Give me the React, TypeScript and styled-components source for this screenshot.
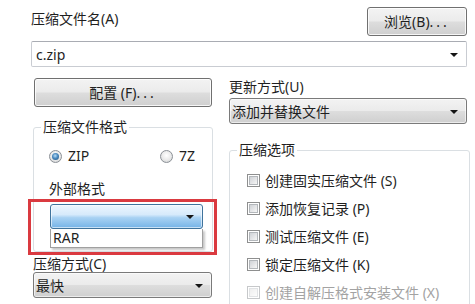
import styled, { createGlobalStyle } from "styled-components";

const GlobalStyle = createGlobalStyle`
  html, body {
    margin: 0;
    background: #ffffff;
  }
  body {
    font-family: "Noto Sans", "Noto Sans CJK SC", sans-serif;
    font-size: 14px;
    color: #1f1f1f;
  }
`;

const Dialog = styled.div`
  width: 475px;
  height: 304px;
  box-sizing: border-box;
  padding: 7px 8px 0 31px;
  overflow: hidden;
`;

const TopRow = styled.div`
  display: flex;
  justify-content: space-between;
  align-items: flex-start;
  height: 29px;
`;

const Label = styled.div<{ $top?: number; $disabled?: boolean }>`
  height: 17px;
  line-height: 17px;
  margin-top: ${(p) => p.$top ?? 0}px;
  white-space: nowrap;
  color: ${(p) => (p.$disabled ? "#a3a3a3" : "#1f1f1f")};
`;

const PushButton = styled.button<{ $width: number; $left?: number }>`
  width: ${(p) => p.$width}px;
  height: 29px;
  margin-left: ${(p) => p.$left ?? 0}px;
  padding: 0;
  box-sizing: border-box;
  border: 1px solid #707070;
  border-radius: 3px;
  background: linear-gradient(#f3f3f3 0%, #ebebeb 48%, #dddddd 52%, #cfcfcf 100%);
  box-shadow: inset 0 0 0 1px rgba(255, 255, 255, 0.8);
  font: inherit;
  line-height: 17px;
  color: #1f1f1f;
  white-space: nowrap;
`;

const Dots = styled.span`
  letter-spacing: 3px;
`;

type ComboKind = "edit" | "list" | "hot";

const comboBackground: Record<ComboKind, string> = {
  edit: "#ffffff",
  list: "linear-gradient(#f3f3f3 0%, #ebebeb 48%, #dddddd 52%, #cfcfcf 100%)",
  hot: "linear-gradient(#edf6fe 0%, #d6eafb 42%, #a9d2f3 55%, #74b3e7 100%)",
};

const comboBorder: Record<ComboKind, string> = {
  edit: "#c9ccd2",
  list: "#7a7a7a",
  hot: "#3f739c",
};

const Combo = styled.div<{ $kind: ComboKind; $width?: number; $pad?: number; $top?: number }>`
  display: flex;
  flex-shrink: 0;
  align-items: center;
  justify-content: space-between;
  width: ${(p) => (p.$width ? `${p.$width}px` : "auto")};
  height: ${(p) => (p.$kind === "hot" ? 25 : 26)}px;
  margin-top: ${(p) => p.$top ?? 0}px;
  box-sizing: border-box;
  padding: 0 8px 0 ${(p) => p.$pad ?? 2}px;
  border: 1px solid ${(p) => comboBorder[p.$kind]};
  border-top-color: ${(p) => (p.$kind === "edit" ? "#a9acb3" : comboBorder[p.$kind])};
  border-radius: ${(p) => (p.$kind === "edit" ? 2 : 3)}px;
  background: ${(p) => comboBackground[p.$kind]};
  box-shadow: ${(p) => (p.$kind === "edit" ? "none" : "inset 0 0 0 1px rgba(255,255,255,0.6)")};
  line-height: 17px;
  white-space: nowrap;
`;

const DropArrow = styled.span`
  width: 0;
  height: 0;
  border-left: 4px solid transparent;
  border-right: 4px solid transparent;
  border-top: 4px solid #151515;
  margin-top: 1px;
`;

const Columns = styled.div`
  display: grid;
  grid-template-columns: 180px 238px;
  column-gap: 16px;
  margin-top: 11px;
  padding-left: 2px;
`;

const Column = styled.div`
  display: flex;
  flex-direction: column;
  & > * {
    flex-shrink: 0;
  }
`;

const GroupBox = styled.fieldset<{ $top: number; $right?: number }>`
  margin: ${(p) => p.$top}px ${(p) => -(p.$right ?? 0)}px 0 0;
  padding: 0;
  min-width: 0;
  border: 1px solid #dadfe3;
  border-radius: 3px;

  legend {
    margin-left: 7px;
    padding: 0 2px;
    height: 16px;
    line-height: 16px;
    white-space: nowrap;
  }
`;

const GroupBody = styled.div<{ $pad: string }>`
  padding: ${(p) => p.$pad};
  display: flex;
  flex-direction: column;
`;

const RadioRow = styled.div`
  display: grid;
  grid-template-columns: 111px auto;
  height: 16px;
  align-items: center;
`;

const RadioOption = styled.label`
  display: flex;
  align-items: center;
  gap: 6px;
  line-height: 16px;
`;

const RadioDot = styled.span<{ $checked?: boolean }>`
  position: relative;
  width: 13px;
  height: 13px;
  box-sizing: border-box;
  border-radius: 50%;
  border: 1px solid #8b9096;
  background: radial-gradient(circle at 50% 40%, #ffffff 0%, #e9e9e9 55%, #c9cccf 100%);

  &::after {
    content: "";
    display: ${(p) => (p.$checked ? "block" : "none")};
    position: absolute;
    inset: 2px;
    border-radius: 50%;
    background: radial-gradient(circle at 45% 40%, #b9ddf7 0%, #4a8ac0 45%, #1d4b74 100%);
  }
`;

const Highlight = styled.div`
  position: relative;
  width: 153px;
  margin: 7px 0 0 1px;

  &::after {
    content: "";
    position: absolute;
    inset: -5px -14px -7px -22px;
    border: 3px solid #da3a40;
    pointer-events: none;
  }
`;

const DropList = styled.div`
  height: 19px;
  box-sizing: border-box;
  padding-left: 2px;
  border: 1px solid #a0a0a0;
  border-top: none;
  background: #ffffff;
  box-shadow: 2px 2px 2px rgba(0, 0, 0, 0.22);
  line-height: 18px;
`;

const CheckRow = styled.label`
  display: flex;
  align-items: center;
  gap: 5px;
  height: 18px;
  line-height: 18px;
  white-space: nowrap;
`;

const CheckBox = styled.span<{ $disabled?: boolean }>`
  position: relative;
  width: 13px;
  height: 13px;
  box-sizing: border-box;
  border: 1px solid ${(p) => (p.$disabled ? "#c6c8ca" : "#8e8f8f")};
  background: #ffffff;

  &::after {
    content: "";
    position: absolute;
    inset: 1px;
    border: 1px solid ${(p) => (p.$disabled ? "#e1e3e5" : "#b3b7bb")};
    background: ${(p) =>
      p.$disabled
        ? "linear-gradient(135deg, #eeeeee, #fcfcfc)"
        : "linear-gradient(135deg, #cfd2d6, #f6f6f6)"};
  }
`;

const CheckList = styled.div`
  display: flex;
  flex-direction: column;
  gap: 10px;
`;

const options = [
  { text: "创建固实压缩文件 (S)" },
  { text: "添加恢复记录 (P)" },
  { text: "测试压缩文件 (E)" },
  { text: "锁定压缩文件 (K)" },
  { text: "创建自解压格式安装文件 (X)", disabled: true },
];

export default function App() {
  return (
    <>
      <GlobalStyle />
      <Dialog>
        <TopRow>
          <Label $top={3}>压缩文件名(A)</Label>
          <PushButton $width={100}>
            浏览(B)<Dots>...</Dots>
          </PushButton>
        </TopRow>
        <Combo $kind="edit" $pad={4} $top={5}>
          c.zip
          <DropArrow />
        </Combo>

        <Columns>
          <Column>
            <PushButton $width={178} $left={1}>
              配置 (F)<Dots>...</Dots>
            </PushButton>
            <GroupBox $top={12}>
              <legend>压缩文件格式</legend>
              <GroupBody $pad="13px 0 3px 15px">
                <RadioRow>
                  <RadioOption>
                    <RadioDot $checked />
                    ZIP
                  </RadioOption>
                  <RadioOption>
                    <RadioDot />
                    7Z
                  </RadioOption>
                </RadioRow>
                <Label $top={16}>外部格式</Label>
                <Highlight>
                  <Combo $kind="hot">
                    <span />
                    <DropArrow />
                  </Combo>
                  <DropList>RAR</DropList>
                </Highlight>
              </GroupBody>
            </GroupBox>
            <Label $top={3}>压缩方式(C)</Label>
            <Combo $kind="list" $width={179} $top={0}>
              最快
              <DropArrow />
            </Combo>
          </Column>

          <Column>
            <Label>更新方式(U)</Label>
            <Combo $kind="list" $top={3}>
              添加并替换文件
              <DropArrow />
            </Combo>
            <GroupBox $top={18} $right={3}>
              <legend>压缩选项</legend>
              <GroupBody $pad="13px 0 12px 17px">
                <CheckList>
                  {options.map((o) => (
                    <CheckRow key={o.text}>
                      <CheckBox $disabled={o.disabled} />
                      <Label $disabled={o.disabled}>{o.text}</Label>
                    </CheckRow>
                  ))}
                </CheckList>
              </GroupBody>
            </GroupBox>
          </Column>
        </Columns>
      </Dialog>
    </>
  );
}
